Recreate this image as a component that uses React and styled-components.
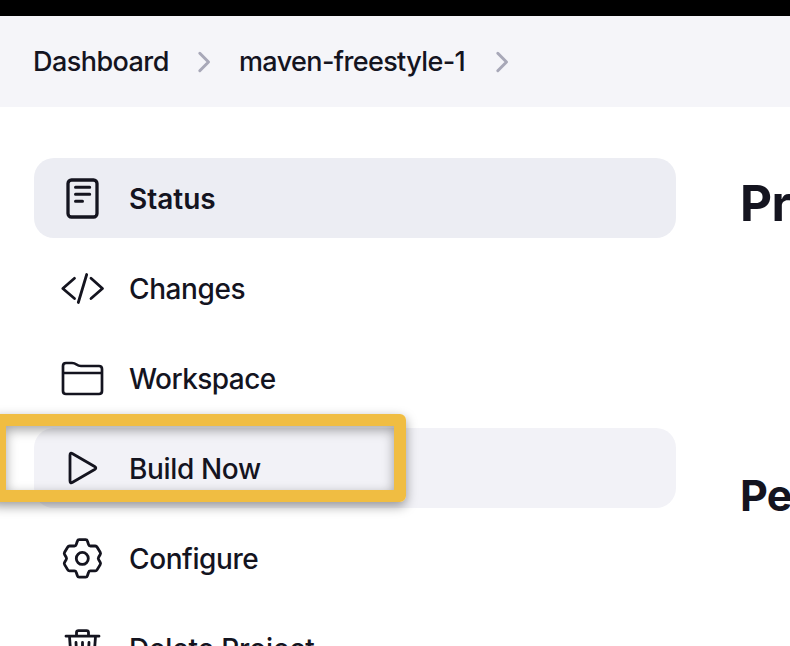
import React from "react";
import styled, { createGlobalStyle } from "styled-components";

const Global = createGlobalStyle`
  * { box-sizing: border-box; }
  body { margin: 0; background: #fff; overflow: hidden; }
`;
const Page = styled.div`
  position: relative;
  width: 790px;
  height: 646px;
  overflow: hidden;
  background: #fff;
  color: #14141f;
  font-family: Inter, "Liberation Sans", sans-serif;
`;
const TopBar = styled.header`
  height: 16px;
  background: #000;
`;
const Breadcrumbs = styled.nav`
  display: flex;
  align-items: center;
  height: 91px;
  padding-left: 33px;
  background: #f5f5f9;
`;
const Crumb = styled.a`
  width: ${(p) => p.$width}px;
  font-size: 27px;
  font-weight: 500;
  line-height: 40px;
  letter-spacing: ${(p) => p.$track}px;
  white-space: nowrap;
`;
const Chevron = styled.svg`
  flex: none;
  width: 14px;
  height: 24px;
  margin: 0 28px 0 29px;
  fill: none;
  stroke: #a8a8b8;
  stroke-width: 3;
  stroke-linecap: round;
  stroke-linejoin: round;
`;
const Body = styled.div`
  display: flex;
  padding: 51px 0 0 34px;
`;
const Tasks = styled.aside`
  display: flex;
  flex-direction: column;
  flex: none;
  gap: 10px;
  width: 642px;
`;
const Task = styled.a`
  display: flex;
  align-items: center;
  gap: 23px;
  height: 80px;
  padding-left: 24px;
  border-radius: 20px;
  background: ${(p) => p.$bg || "transparent"};
`;
const TaskLabel = styled.span`
  font-size: 28px;
  font-weight: ${(p) => (p.$active ? 600 : 500)};
  line-height: 40px;
  letter-spacing: ${(p) => p.$track}px;
  padding-top: 2px;
  white-space: nowrap;
`;
const Icon = styled.svg`
  flex: none;
  width: 48px;
  height: 48px;
  fill: none;
  stroke: #14141f;
  stroke-width: 2.8;
  stroke-linecap: round;
  stroke-linejoin: round;
`;
const Main = styled.main`
  flex: none;
  padding: 15px 0 0 64px;
  white-space: nowrap;
`;
const Title = styled.h1`
  margin: 0;
  font-size: 49.5px;
  line-height: 60px;
  font-weight: 700;
  letter-spacing: -0.6px;
`;
const Subtitle = styled.h2`
  margin: 234px 0 0;
  font-size: 43px;
  line-height: 56px;
  font-weight: 700;
  letter-spacing: -0.8px;
`;
const Highlight = styled.div`
  position: absolute;
  left: -10px;
  top: 414px;
  width: 416px;
  height: 88px;
  border: 12px solid #f0bd42;
  border-left-width: 16px;
  border-radius: 6px;
  box-shadow: 0 4px 12px rgba(0, 0, 0, 0.4), inset 0 4px 12px rgba(0, 0, 0, 0.36);
`;

const icons = {
  status: (
    <>
      <rect x="10" y="6" width="29" height="37" rx="3.5" strokeWidth="3.3" />
      <path strokeWidth="3" d="M17.5 13.3h14.2M17.5 20.2h14.2M17.5 27.3h7" />
    </>
  ),
  changes: <path d="M16.5 14.3 4.8 24.5l11.7 10M28.7 10.5l-8.4 28M33 14.3l11.5 10.2L33 34.5" />,
  workspace: (
    <path
      strokeWidth="2.7"
      d="M5 12q0-3 3-3h6c5 0 4 3 9 3h18q3 0 3 3v22q0 3-3 3H8q-3 0-3-3zM5 19h39"
    />
  ),
  build: (
    <path
      strokeWidth="2.8"
      d="M12 11.2q0-3 2.6-1.5l22 12.8q2.4 1.5 0 3l-22 12.8q-2.6 1.5-2.6-1.5z"
    />
  ),
  configure: (
    <>
      <circle cx="24.3" cy="24.4" r="6" />
      <path d="M21.2 5.6h6.4q1.4 0 1.8 1.4l1.2 3.6q.4 1.4 1.8 1.4h4.8q1.3 0 2 1.2l3 5q.7 1.2 0 2.3l-1.6 2.7q-.7 1.2 0 2.4l1.6 2.7q.7 1.1 0 2.3l-3 5q-.7 1.2-2 1.2h-4.8q-1.400 0-1.800 1.400l-1.200 3.600q-.4 1.400-1.800 1.400h-6.400q-1.400 0-1.800-1.400l-1.200-3.600q-.4-1.400-1.800-1.400h-4.800q-1.300 0-2-1.200l-3-5q-.7-1.200 0-2.300l1.600-2.700q.7-1.200 0-2.400l-1.600-2.700q-.7-1.100 0-2.300l3-5q.7-1.200 2-1.200h4.800q1.400 0 1.800-1.400l1.200-3.600q.4-1.400 1.800-1.400z" />
    </>
  ),
  trash: (
    <path d="M8 12.200h33M11.500 12.500l2 27.500q.2 3 3 3h16q2.800 0 3-3l2-27.500M18.500 11.500V8.600q0-2 2-2h8q2 0 2 2v2.900M18 18.500l.8 17.500M24.500 18.500v17.500M31 18.500l-.8 17.500" />
  ),
};

const tasks = [
  { icon: "status", label: "Status", track: 0, bg: "#ecedf3", active: true },
  { icon: "changes", label: "Changes", track: -0.4 },
  { icon: "workspace", label: "Workspace", track: -0.55 },
  { icon: "build", label: "Build Now", track: -0.35, bg: "#f2f2f7" },
  { icon: "configure", label: "Configure", track: -0.4 },
  { icon: "trash", label: "Delete Project", track: -0.15 },
];

const Separator = () => (
  <Chevron viewBox="0 0 14 24">
    <path d="m2.800 3.300 8.700 8.700-8.700 8.700" />
  </Chevron>
);

export default function App() {
  return (
    <Page>
      <Global />
      <TopBar />
      <Breadcrumbs>
        <Crumb $width={135} $track={-0.55}>Dashboard</Crumb>
        <Separator />
        <Crumb $width={227} $track={-0.62}>maven-freestyle-1</Crumb>
        <Separator />
      </Breadcrumbs>
      <Body>
        <Tasks>
          {tasks.map((t) => (
            <Task key={t.label} $bg={t.bg}>
              <Icon viewBox="0 0 48 48">{icons[t.icon]}</Icon>
              <TaskLabel $track={t.track} $active={t.active}>{t.label}</TaskLabel>
            </Task>
          ))}
        </Tasks>
        <Main>
          <Title>Project</Title>
          <Subtitle>Permalinks</Subtitle>
        </Main>
      </Body>
      <Highlight />
    </Page>
  );
}
